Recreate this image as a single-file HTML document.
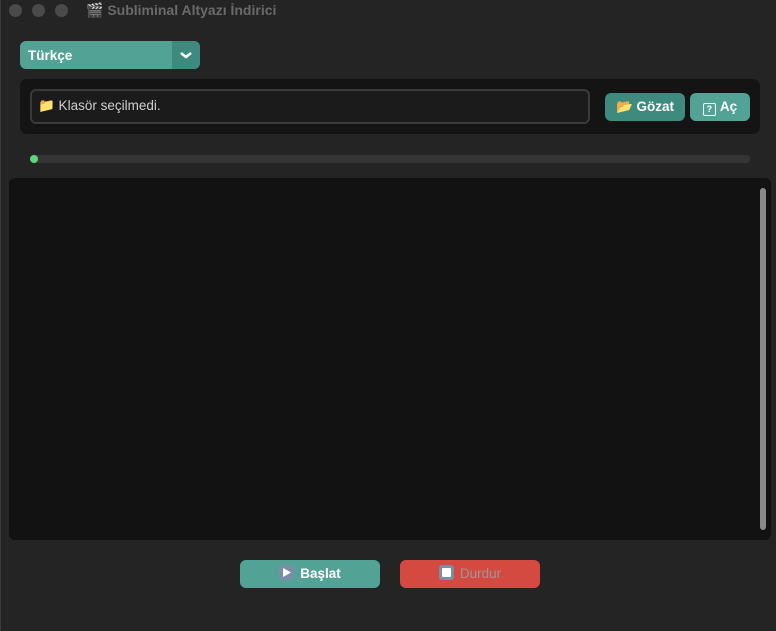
<!DOCTYPE html>
<html><head><meta charset="utf-8"><style>
*{box-sizing:border-box;margin:0;padding:0}
body{width:776px;height:631px;background:#242424;font-family:"Liberation Sans",sans-serif;position:relative;overflow:hidden}
.edge{position:absolute;left:0;top:0;width:1px;height:631px;background:#3a3a3a}
.dot{position:absolute;top:4px;width:13px;height:13px;border-radius:50%;background:#4a4a4a}
.title{position:absolute;left:86px;top:2px;font-size:14px;font-weight:bold;color:#6a6a6a}
.sel{position:absolute;left:20px;top:41px;width:180px;height:28px;border-radius:6px;background:#52a396;overflow:hidden}
.sel span{position:absolute;left:8px;top:7px;color:#fff;font-size:13.5px;font-weight:bold}
.sel .ar{position:absolute;right:0;top:0;width:28px;height:28px;background:#3e8a7e}
.frame{position:absolute;left:20px;top:79px;width:740px;height:55px;border-radius:7px;background:#141414}
.inp{position:absolute;left:10px;top:10px;width:560px;height:35px;border:2px solid #3a3a3a;border-radius:6px;background:#1b1b1b;color:#cfcfcf;font-size:13.5px;padding:7px 0 0 6px}
.btn{position:absolute;height:28px;border-radius:6px;color:#fff;font-size:13.5px;font-weight:bold;text-align:center;line-height:28px}
.prog{position:absolute;left:30px;top:155px;width:720px;height:8px;border-radius:4px;background:#353535}
.pd{position:absolute;left:30px;top:155px;width:8px;height:8px;border-radius:50%;background:#5bd87a}
.log{position:absolute;left:9px;top:178px;width:762px;height:362px;border-radius:6px;background:#121212}
.sb{position:absolute;left:760px;top:188px;width:6px;height:342px;border-radius:3px;background:#8a8a8a}
.ic{display:inline-block;width:15px;height:15px;border-radius:3px;vertical-align:-2px;margin-right:6px;background:#7b8ea8;position:relative}
</style></head><body>
<div class="edge"></div>
<div class="dot" style="left:9px"></div><div class="dot" style="left:32px"></div><div class="dot" style="left:55px"></div>
<div class="title">🎬 Subliminal Altyazı İndirici</div>
<div class="sel"><span>Türkçe</span><div class="ar"><svg width="28" height="28"><path d="M9 12l5 4 5-4" stroke="#fff" stroke-width="2.5" fill="none"/></svg></div></div>
<div class="frame">
<div class="inp">📁 Klasör seçilmedi.</div>
<div class="btn" style="left:585px;top:14px;width:80px;background:#3e8a7e">📂 Gözat</div>
<div class="btn" style="left:670px;top:14px;width:60px;background:#52a396"><span style="display:inline-block;width:13px;height:13px;border:1.5px solid #fff;border-radius:2px;font-size:9px;line-height:10px;vertical-align:-1px;margin-right:4px">?</span>Aç</div>
</div>
<div class="prog"></div><div class="pd"></div>
<div class="log"></div><div class="sb"></div>
<div class="btn" style="left:240px;top:560px;width:140px;background:#52a396"><span class="ic"><svg width="15" height="15" style="position:absolute;left:0;top:0"><path d="M4 3l8 4.5-8 4.5z" fill="#fff"/></svg></span>Başlat</div>
<div class="btn" style="left:400px;top:560px;width:140px;background:#d44a40;color:#999;font-weight:normal"><span class="ic"><span style="position:absolute;left:3px;top:3px;width:9px;height:9px;background:#fff;border-radius:1px"></span></span>Durdur</div>
</body></html>
